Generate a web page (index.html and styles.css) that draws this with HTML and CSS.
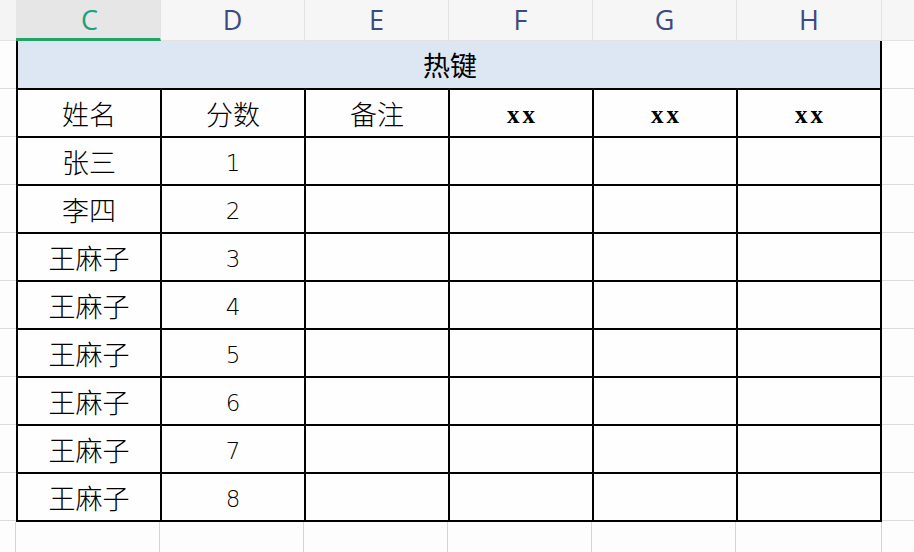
FILE: index.html
```html
<!DOCTYPE html>
<html lang="zh">
<head>
<meta charset="utf-8">
<title>热键</title>
<link rel="stylesheet" href="styles.css">
</head>
<body>
<div class="sheet">
  <div class="corner"></div>
  <div class="colheads">
    <div class="colhead selected">C</div>
    <div class="colhead">D</div>
    <div class="colhead">E</div>
    <div class="colhead">F</div>
    <div class="colhead">G</div>
    <div class="colhead">H</div>
  </div>
  <div class="colhead-rest"></div>

  <div class="gutter left">
    <div class="gline"></div><div class="gline"></div><div class="gline"></div><div class="gline"></div><div class="gline"></div>
    <div class="gline"></div><div class="gline"></div><div class="gline"></div><div class="gline"></div><div class="gline"></div>
  </div>
  <div class="table">
    <div class="cell title">热键</div>
    <div class="cell">姓名</div><div class="cell">分数</div><div class="cell">备注</div><div class="cell xx">xx</div><div class="cell xx">xx</div><div class="cell xx">xx</div>
    <div class="cell">张三</div><div class="cell num">1</div><div class="cell"></div><div class="cell"></div><div class="cell"></div><div class="cell"></div>
    <div class="cell">李四</div><div class="cell num">2</div><div class="cell"></div><div class="cell"></div><div class="cell"></div><div class="cell"></div>
    <div class="cell">王麻子</div><div class="cell num">3</div><div class="cell"></div><div class="cell"></div><div class="cell"></div><div class="cell"></div>
    <div class="cell">王麻子</div><div class="cell num">4</div><div class="cell"></div><div class="cell"></div><div class="cell"></div><div class="cell"></div>
    <div class="cell">王麻子</div><div class="cell num">5</div><div class="cell"></div><div class="cell"></div><div class="cell"></div><div class="cell"></div>
    <div class="cell">王麻子</div><div class="cell num">6</div><div class="cell"></div><div class="cell"></div><div class="cell"></div><div class="cell"></div>
    <div class="cell">王麻子</div><div class="cell num">7</div><div class="cell"></div><div class="cell"></div><div class="cell"></div><div class="cell"></div>
    <div class="cell">王麻子</div><div class="cell num">8</div><div class="cell"></div><div class="cell"></div><div class="cell"></div><div class="cell"></div>
  </div>
  <div class="gutter right">
    <div class="gline"></div><div class="gline"></div><div class="gline"></div><div class="gline"></div><div class="gline"></div>
    <div class="gline"></div><div class="gline"></div><div class="gline"></div><div class="gline"></div><div class="gline"></div>
  </div>

  <div class="bottom-corner"></div>
  <div class="bottom-cols">
    <div class="bcol"></div><div class="bcol"></div><div class="bcol"></div><div class="bcol"></div><div class="bcol"></div><div class="bcol"></div>
  </div>
  <div class="bottom-rest"></div>
</div>
</body>
</html>
```

FILE: styles.css
```css
html, body {
  margin: 0;
  padding: 0;
  background: #fdfdfd;
}

.sheet {
  display: grid;
  grid-template-columns: 16px 866px 32px;
  grid-template-rows: 41px 481px 30px;
  width: 914px;
  height: 552px;
  overflow: hidden;
  font-family: "Noto Sans CJK SC", "Noto Sans", sans-serif;
}

.corner {
  background: #f4f4f4;
  border-bottom: 1px solid #e2e2e2;
  box-sizing: border-box;
}

.colheads {
  display: grid;
  grid-template-columns: 145px 144px 144px 144px 144px 145px;
}

.colhead {
  background: #f6f6f6;
  border-right: 1px solid #e3e3e3;
  border-bottom: 1px solid #e2e2e2;
  box-sizing: border-box;
  display: flex;
  align-items: center;
  justify-content: center;
  font-family: "Open Sans", "Noto Sans", sans-serif;
  font-weight: 400;
  font-size: 27px;
  color: #3d4a7e;
  padding-bottom: 2px;
}

.colhead.selected {
  background: #e6e6e6;
  color: #20a07a;
  border-bottom: 3px solid #1fa463;
  padding-bottom: 0;
  padding-left: 3px;
}

.colhead-rest {
  background: #f6f6f6;
  border-bottom: 1px solid #e2e2e2;
  box-sizing: border-box;
}

.gutter {
  display: flex;
  flex-direction: column;
}

.gline {
  height: 48px;
  border-bottom: 1px solid #dcdcdc;
  box-sizing: border-box;
  flex: none;
}

.table {
  display: grid;
  grid-template-columns: repeat(6, 142px);
  grid-template-rows: 47px repeat(9, 46px);
  gap: 2px;
  padding: 0 2px 2px 2px;
  background: #000;
  height: 481px;
  box-sizing: border-box;
}

.cell {
  background: #fefefe;
  display: flex;
  align-items: center;
  justify-content: center;
  font-size: 27px;
  font-weight: 300;
  color: #000;
  line-height: 1;
}

.cell.title {
  grid-column: 1 / span 6;
  background: #dde7f3;
  font-weight: 400;
  padding-left: 2px;
}

.cell.num {
  font-family: "DejaVu Sans", "Noto Sans", sans-serif;
  font-weight: 300;
  font-size: 23px;
  padding-top: 4px;
  box-sizing: border-box;
}

.cell.xx {
  font-family: "Liberation Serif", serif;
  font-weight: bold;
  font-size: 25px;
  letter-spacing: 3px;
  padding-left: 3px;
  padding-top: 2px;
  box-sizing: border-box;
}

.bottom-corner {
  border-right: 1px solid #d4d4d4;
  box-sizing: border-box;
}

.bottom-cols {
  display: grid;
  grid-template-columns: 144px 144px 144px 144px 144px 146px;
}

.bcol {
  border-right: 1px solid #d4d4d4;
}

.bottom-rest {
  background: #fdfdfd;
}
```
